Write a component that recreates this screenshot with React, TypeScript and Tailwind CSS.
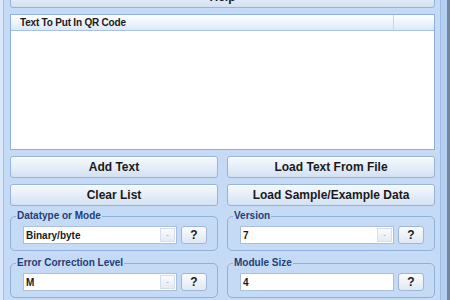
import React from "react";

const font = { fontFamily: '"Liberation Sans", Arial, sans-serif' };

function Btn({ label, className = "" }: { label: string; className?: string }) {
  return (
    <button
      className={
        "h-[22px] rounded-[3px] border border-[#97b3d8] bg-gradient-to-b from-[#f6f9fd] via-[#e6eef9] to-[#d3e1f3] text-[12px] font-bold text-[#1a1a1a] shadow-[inset_0_1px_0_#ffffff] " +
        className
      }
    >
      {label}
    </button>
  );
}

function HelpBtn() {
  return (
    <button className="h-[18px] w-[26px] shrink-0 rounded-[3px] border border-[#9fb7d6] bg-gradient-to-b from-[#fbfcfe] to-[#dfe8f4] text-[12px] font-bold leading-none text-[#1a1a1a]">
      ?
    </button>
  );
}

function Combo({ value, dropdown = true, width }: { value: string; dropdown?: boolean; width: string }) {
  return (
    <div className={"flex h-[18px] items-stretch border border-[#a9bfdc] bg-white " + width}>
      <div className="flex flex-1 items-center pl-[2px] text-[10px] font-bold text-[#1a1a1a]">{value}</div>
      {dropdown && (
        <div className="m-[1px] flex w-[15px] items-center justify-center border border-[#d5dfec] bg-gradient-to-b from-[#fafbfd] to-[#e4ebf4] text-[8px] leading-none text-[#8c99aa]">
          -
        </div>
      )}
    </div>
  );
}

function Group({ title, children, className = "" }: { title: string; children: React.ReactNode; className?: string }) {
  return (
    <fieldset className={"rounded-[5px] border border-[#8fb0d9] pl-[12px] pt-[4px] pb-[6px] " + className}>
      <legend className="ml-[-7px] px-[1px] text-[10px] font-bold leading-[12px] text-[#1f3d78]">{title}</legend>
      <div className="flex items-center gap-[4px]">{children}</div>
    </fieldset>
  );
}

export default function App() {
  return (
    <div className="flex h-[300px] w-[450px] overflow-hidden bg-[#c5dbf5]" style={font}>
      <div className="w-[4px] shrink-0 border-r border-[#a3bfe4] bg-[#d8e7f9]" />
      <div className="flex flex-1 flex-col gap-[6px] pl-[6px] pr-[5px] mt-[-14px]">
        <Btn label="Help" className="w-full shrink-0" />
        <div className="flex h-[136px] shrink-0 flex-col border border-[#8eaed7] bg-white">
          <div className="flex h-[16px] items-center border-b border-[#a7c1e2] bg-gradient-to-b from-[#ffffff] to-[#dbe8f8]">
            <div className="flex h-full w-[383px] items-center border-r border-[#c7d6ea] pl-[9px] text-[10px] font-bold tracking-[-0.2px] text-[#1a1a1a]">
              Text To Put In QR Code
            </div>
          </div>
          <div className="flex-1" />
        </div>
        <div className="grid shrink-0 grid-cols-2 gap-x-[9px] gap-y-[6px]">
          <Btn label="Add Text" />
          <Btn label="Load Text From File" />
          <Btn label="Clear List" />
          <Btn label="Load Sample/Example Data" />
        </div>
        <div className="grid shrink-0 grid-cols-2 gap-x-[9px] gap-y-[6px] mt-[-2px]">
          <Group title="Datatype or Mode">
            <Combo value="Binary/byte" width="w-[154px]" />
            <HelpBtn />
          </Group>
          <Group title="Version">
            <Combo value="7" width="w-[154px]" />
            <HelpBtn />
          </Group>
          <Group title="Error Correction Level">
            <Combo value="M" width="w-[154px]" />
            <HelpBtn />
          </Group>
          <Group title="Module Size">
            <Combo value="4" dropdown={false} width="w-[154px]" />
            <HelpBtn />
          </Group>
        </div>
      </div>
      <div className="w-[7px] shrink-0 border-l border-[#9fbce3] bg-[#b4cff1]" />
      <div className="w-[3px] shrink-0 bg-[#76879d]" />
    </div>
  );
}
